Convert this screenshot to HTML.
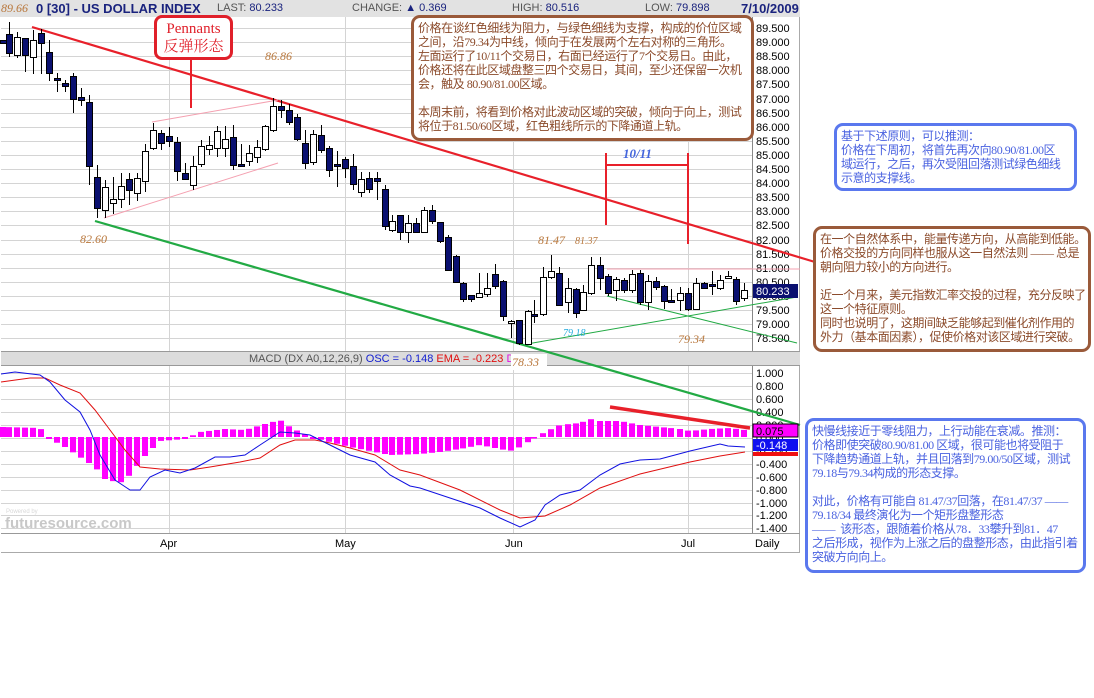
<!DOCTYPE html>
<html><head><meta charset="utf-8">
<style>
html,body{margin:0;padding:0;background:#fff;}
body{width:1094px;height:698px;position:relative;overflow:hidden;font-family:"Liberation Sans","WenQuanYi Zen Hei",sans-serif;}
.box{position:absolute;background:#fff;border:3px solid #9a5a3a;border-radius:9px;font-family:"Liberation Serif","WenQuanYi Zen Hei",serif;font-size:12px;letter-spacing:-0.45px;line-height:14px;color:#8b4a2a;padding:3px 4px;box-sizing:border-box;white-space:nowrap;overflow:hidden;}
.blue{border-color:#5a78ee;color:#4a62e0;}
.hdr{position:absolute;top:0;left:0;width:800px;height:17px;background:#e2e2e2;font-size:11px;color:#555;}
.hdr span{position:absolute;top:2px;}
</style></head><body>
<svg id="c" width="1094" height="698" style="position:absolute;left:0;top:0" xmlns="http://www.w3.org/2000/svg" font-family="Liberation Sans, sans-serif"></svg>
<div class="hdr">
<span style="left:1px;color:#b8763a;font-family:'Liberation Serif',serif;font-style:italic;font-size:12px;top:1px">89.66</span>
<span style="left:36px;color:#1a237e;font-weight:bold;font-size:13px;top:1px">0 [30] - US DOLLAR INDEX</span>
<span style="left:217px">LAST: <b style="font-weight:normal;color:#1a237e">80.233</b></span>
<span style="left:352px">CHANGE: <span style="position:static;color:#1a237e">▲ 0.369</span></span>
<span style="left:512px">HIGH: <span style="position:static;color:#1a237e">80.516</span></span>
<span style="left:645px">LOW: <span style="position:static;color:#1a237e">79.898</span></span>
<span style="left:741px;color:#1a237e;font-weight:bold;font-size:13px;top:1px">7/10/2009</span>
</div>
<div style="position:absolute;left:154px;top:15px;width:79px;height:45px;border:3px solid #e0202a;border-radius:8px;box-sizing:border-box;background:#fff;color:#e0202a;font-family:'Liberation Serif','Noto Serif CJK SC',serif;font-size:15px;line-height:18px;text-align:center;padding-top:2px">Pennants<br>反弹形态</div>
<div class="box" style="left:411px;top:15px;width:343px;height:126px;">价格在谈红色细线为阻力，与绿色细线为支撑，构成的价位区域<br>之间，沿79.34为中线，倾向于在发展两个左右对称的三角形。<br>左面运行了10/11个交易日，右面已经运行了7个交易日。由此，<br>价格还将在此区域盘整三四个交易日，其间，至少还保留一次机<br>会，触及 80.90/81.00区域。<br><br>本周末前，将看到价格对此波动区域的突破，倾向于向上，测试<br>将位于81.50/60区域，红色粗线所示的下降通道上轨。</div>
<div class="box blue" style="left:834px;top:123px;width:243px;height:68px;">基于下述原则，可以推测：<br>价格在下周初，将首先再次向80.90/81.00区<br>域运行，之后，再次受阻回落测试绿色细线<br>示意的支撑线。</div>
<div class="box" style="left:813px;top:226px;width:278px;height:126px;">在一个自然体系中，能量传递方向，从高能到低能。<br>价格交投的方向同样也服从这一自然法则 —— 总是<br>朝向阻力较小的方向进行。<br><br>近一个月来，美元指数汇率交投的过程，充分反映了<br>这一个特征原则。<br>同时也说明了，这期间缺乏能够起到催化剂作用的<br>外力（基本面因素），促使价格对该区域进行突破。</div>
<div class="box blue" style="left:805px;top:418px;width:281px;height:155px;">快慢线接近于零线阻力，上行动能在衰减。推测：<br>价格即使突破80.90/81.00 区域，很可能也将受阻于<br>下降趋势通道上轨，并且回落到79.00/50区域，测试<br>79.18与79.34构成的形态支撑。<br><br>对此，价格有可能自 81.47/37回落，在81.47/37 ——<br>79.18/34 最终演化为一个矩形盘整形态<br>——&nbsp; 该形态，跟随着价格从78．33攀升到81．47<br>之后形成，视作为上涨之后的盘整形态，由此指引着<br>突破方向向上。</div>
<script>
var s=document.getElementById('c'),h='';
function L(x1,y1,x2,y2,c,w){h+='<line x1="'+x1+'" y1="'+y1+'" x2="'+x2+'" y2="'+y2+'" stroke="'+c+'" stroke-width="'+(w||1)+'"/>';}
function R(x,y,w,hh,f,st){h+='<rect x="'+x+'" y="'+y+'" width="'+w+'" height="'+hh+'" fill="'+f+'"'+(st?' stroke="'+st+'"':'')+'/>';}
function T(x,y,t,c,sz,ex){h+='<text x="'+x+'" y="'+y+'" fill="'+c+'" font-size="'+(sz||11)+'" '+(ex||'')+'>'+t+'</text>';}
R(0,17,800,536,'#fff');
for(var k=0;k<24;k++){var y=Math.round(28+k*14.1)+.5;L(1,y,752,y,'#d4d4d4');}
for(var k=0;k<13;k++){var y=Math.round(373+k*12.95)+.5;L(1,y,752,y,'#d4d4d4');}
[169,345,513,688].forEach(function(x){L(x+.5,17,x+.5,352,'#d4d4d4');L(x+.5,365,x+.5,533,'#d4d4d4');});
L(752.5,17,752.5,533,'#888');L(799.5,0,799.5,553,'#aaa');L(1,351.5,800,351.5,'#999');
R(1,352,799,13,'#dcdcdc');L(1,365.5,800,365.5,'#999');L(1,533.5,800,533.5,'#999');L(1,552.5,800,552.5,'#aaa');
var p=89.5;for(var k=0;k<23;k++){T(756,Math.round(32+k*14.1),(p-k*.5).toFixed(3),'#000',11);}
var m=1.0;for(var k=0;k<13;k++){T(756,Math.round(377+k*12.95),(m-k*.2).toFixed(3),'#000',11);}
T(160,547,'Apr','#000',11);T(335,547,'May','#000',11);T(505,547,'Jun','#000',11);T(681,547,'Jul','#000',11);T(755,547,'Daily','#000',11);
L(32,27,815,262,'#e8202a',2.2);L(95,221,800,425,'#22aa44',2.2);
L(152,122,278,100,'#f4a0b0',1);L(104,218,278,163,'#f4a0b0',1);L(607,269,800,269,'#f4a0b0',1);
L(607,296,797,343,'#22aa44',1);L(527,344,797,297,'#22aa44',1);
L(606,153,606,225,'#e8202a',2);L(688,153,688,244,'#e8202a',2);L(606,165,688,165,'#e8202a',2);
L(191,60,191,108,'#e8202a',2);
var c=[[3,40,43,40,44,1],[9,34,53,22,57,1],[17,37,55,32,58,0],[25,38,55,38,72,1],[33,40,57,30,74,0],[41,33,43,29,74,1],[49,52,73,40,81,1],[57,78,80,73,92,1],[65,83,86,80,92,1],[73,76,99,73,113,1],[81,97,100,88,106,1],[89,102,166,95,185,1],[97,177,208,165,218,1],[105,187,210,180,218,0],[113,199,203,177,214,0],[121,186,199,173,208,0],[129,179,190,173,205,1],[137,178,193,173,201,0],[145,151,181,144,192,0],[153,130,148,123,150,0],[161,133,143,130,150,1],[169,136,141,127,147,1],[177,142,171,137,181,1],[185,173,179,163,180,1],[193,166,185,156,190,0],[201,146,164,140,167,0],[209,145,149,136,155,0],[217,131,148,126,157,0],[225,139,148,126,157,0],[233,137,165,125,170,1],[241,164,166,144,167,1],[249,153,161,145,166,0],[257,147,157,140,163,0],[265,126,149,125,151,0],[273,106,130,98,132,0],[281,106,110,100,118,1],[289,110,122,104,125,1],[297,117,139,114,141,1],[305,143,163,130,169,1],[313,134,162,130,165,0],[321,135,150,125,153,1],[329,148,170,146,177,1],[337,164,166,151,187,1],[345,159,168,157,178,1],[353,166,184,154,190,1],[361,179,192,172,197,0],[369,178,189,172,193,1],[377,178,181,172,200,1],[385,189,226,185,230,1],[392,221,230,215,232,0],[400,215,232,215,240,1],[408,223,232,215,243,0],[416,223,232,218,233,1],[424,210,232,207,233,0],[432,210,221,205,224,1],[440,222,241,222,243,1],[448,237,270,235,271,1],[456,256,282,255,282,1],[463,283,299,282,302,1],[471,295,299,295,302,1],[479,293,297,273,298,0],[487,288,294,273,297,0],[495,274,286,264,289,1],[503,281,316,280,321,1],[511,321,323,320,338,0],[519,320,343,320,345,1],[528,311,344,310,345,0],[534,314,315,300,323,1],[543,277,314,267,316,0],[551,271,277,255,279,0],[559,273,305,267,306,1],[568,288,302,278,313,0],[576,289,313,288,318,1],[583,292,310,285,310,0],[591,265,293,257,295,0],[600,265,278,257,290,1],[608,276,293,274,296,1],[616,279,290,277,301,0],[624,280,290,278,293,1],[632,274,290,270,293,0],[640,273,302,270,305,1],[648,281,302,275,310,0],[656,281,287,277,290,1],[664,286,301,285,309,1],[671,300,302,289,303,1],[680,293,300,287,311,0],[688,293,309,288,311,1],[696,283,309,278,310,0],[704,283,288,282,288,1],[712,284,286,271,295,1],[720,280,288,275,290,0],[728,276,277,271,279,0],[736,279,301,277,305,1],[744,290,298,283,301,0]];
c.forEach(function(a){L(a[0]+.5,a[3],a[0]+.5,a[4],'#000',1);var bh=Math.max(2,a[2]-a[1]);R(a[0]-2.5,a[1]+.5,6,bh,a[5]?'#0a1070':'#fff','#000');});
var it='font-family="Liberation Serif, serif" font-style="italic"';
T(265,60,'86.86','#b8763a',12,it);T(80,243,'82.60','#b8763a',12,it);T(538,244,'81.47','#b8763a',12,it);T(575,244,'81.37','#b8763a',10,it);
T(563,336,'79.18','#22aadd',10,it);T(678,343,'79.34','#b8763a',12,it);T(623,158,'10/11','#4466dd',13,it+' font-weight="bold"');
R(753,284,45,14,'#0a1070');T(756,295,'80.233','#fff',11);
h+='<text x="249" y="362" font-size="11" fill="#555">MACD (DX A0,12,26,9) <tspan fill="#1520d0">OSC = -0.148</tspan> <tspan fill="#e01010">EMA = -0.223</tspan> <tspan fill="#e010e0">DIF</tspan></text>';
R(511,354,36,16,'#fff');T(512,366,'78.33','#b8763a',12,it);
var hp=[[3,10],[40,9],[50,-2],[65,-10],[80,-20],[95,-30],[105,-42],[120,-46],[130,-38],[143,-21],[160,-4],[185,-2],[200,5],[225,8],[245,7],[265,13],[280,17],[290,10],[300,5],[310,0],[330,-5],[350,-10],[375,-15],[390,-18],[420,-17],[440,-15],[460,-12],[480,-8],[500,-12],[510,-14],[520,-10],[530,-4],[545,5],[560,12],[580,14],[590,18],[600,16],[620,16],[640,12],[660,10],[680,8],[690,6],[710,8],[730,9],[745,7]];
function hv(x){for(var i=0;i<hp.length-1;i++){if(x>=hp[i][0]&&x<=hp[i+1][0]){var t=(x-hp[i][0])/(hp[i+1][0]-hp[i][0]);return hp[i][1]+t*(hp[i+1][1]-hp[i][1]);}}return 7;}
c.forEach(function(a){var v=hv(a[0]);if(Math.abs(v)<1)v=v<0?-2:2;if(v>0)R(a[0]-3,437-v,6,v,'#ff00ff');else R(a[0]-3,437,6,-v,'#ff00ff');});
function P(pts,col){h+='<polyline fill="none" stroke="'+col+'" stroke-width="1" points="'+pts+'"/>';}
P('1,382 30,378 45,378 60,385 80,393 95,410 110,430 125,450 140,467 160,469 190,470 210,467 240,462 260,458 280,445 295,440 315,440 330,443 350,448 375,455 400,470 420,475 460,490 500,510 520,518 545,516 570,505 600,488 640,474 690,462 720,456 745,452','#e01010');
P('1,374 15,372 40,375 50,382 65,400 80,412 90,430 100,455 115,480 130,490 140,490 150,477 165,470 180,473 195,468 215,457 230,457 245,455 260,445 280,432 295,433 310,435 330,445 350,455 375,462 390,475 410,486 420,488 450,498 480,508 500,518 520,527 535,520 545,505 560,495 580,490 600,475 620,464 640,460 660,459 690,451 720,444 728,446 745,447','#1010e0');
L(610,407,750,428,'#e8202a',3.5);
R(753,424,45,13,'#ff00ff','#000');T(756,435,'0.075','#000',11);
R(753,439,45,12,'#1010f0');T(756,449,'-0.148','#fff',11);R(753,452,45,4,'#f01010');
T(5,528,'futuresource.com','#c8c8c8',15,'font-weight="bold"');T(6,513,'Powered by','#d8d8d8',6);
s.innerHTML=h;
</script>
</body></html>
